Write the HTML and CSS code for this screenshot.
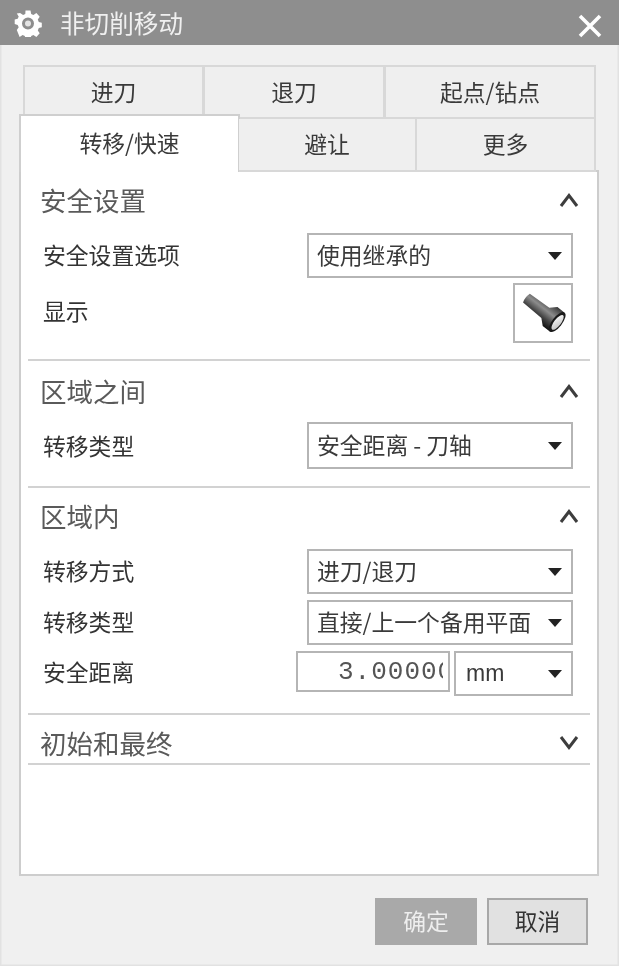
FILE: index.html
```html
<!DOCTYPE html>
<html lang="zh">
<head>
<meta charset="utf-8">
<title>非切削移动</title>
<link rel="stylesheet" href="styles.css">
</head>
<body>
<div class="window">
  <header class="titlebar">
    <svg class="gear" width="28" height="28" viewBox="0 0 28 28"><path fill="#fff" fill-rule="evenodd" d="M11.500 1.500h5l.7 3.500 2.200 1 3-1.900 3.300 3.600-1.900 2.900 1 2.300 3 .8v4.600l-3 .8-1 2.300 1.900 2.900-3.300 3.600-3-1.900-2.200 1-.7 3.500h-5l-.7-3.500-2.200-1-3 1.900L2.800 21.100l1.900-2.900-1-2.300-3-.8v-4.600l3-.8 1-2.300-1.900-2.900L6.100 4.100l3 1.900 2.200-1zM14 8.500a6 6 0 1 0 0 12 6 6 0 0 0 0-12z"/><circle cx="14" cy="14.500" r="3" fill="#e4e4e4"/></svg>
    <span class="title">非切削移动</span>
    <svg class="close" width="24" height="24" viewBox="0 0 24 24"><path d="M2 2l20 20M22 2L2 22" stroke="#fff" stroke-width="3.600" fill="none"/></svg>
  </header>

  <div class="tabs">
    <div class="tab-row tab-row-top">
      <div class="tab tab-a">进刀</div>
      <div class="tab tab-b">退刀</div>
      <div class="tab tab-c">起点/钻点</div>
    </div>
    <div class="tab-row tab-row-bottom">
      <div class="tab tab-active">转移/快速</div>
      <div class="tab tab-d">避让</div>
      <div class="tab tab-e">更多</div>
    </div>
  </div>

  <main class="panel">
    <section class="section section-safe">
      <div class="section-head"><span>安全设置</span><svg class="chev" width="22" height="16" viewBox="0 0 22 16"><path d="M3 14L11 3.500 19 14" stroke="#3d3d3d" stroke-width="3" fill="none"/></svg></div>
      <div class="row">
        <label>安全设置选项</label>
        <div class="select"><span>使用继承的</span><i class="caret"></i></div>
      </div>
      <div class="row row-show">
        <label>显示</label>
        <button class="icon-btn" type="button">
          <svg width="56" height="56" viewBox="-28 -28 56 56">
            <defs>
              <linearGradient id="body" x1="0" y1="0" x2="0" y2="1"><stop offset="0" stop-color="#3a3a3a"/><stop offset=".4" stop-color="#8c8c8c"/><stop offset=".7" stop-color="#444"/><stop offset="1" stop-color="#111"/></linearGradient>
              <linearGradient id="lens" x1="0" y1="0" x2="1" y2="1"><stop offset="0" stop-color="#fff"/><stop offset="1" stop-color="#bbb"/></linearGradient>
            </defs>
            <g transform="translate(0 -2) rotate(38)">
              <path d="M-21 -5.500 Q-23 0 -21 5.500 L3 6.500 L9 12 L18 12 L18 -12 L9 -12 L3 -6.500 Z" fill="url(#body)"/>
              <ellipse cx="18" cy="0" rx="5" ry="12" fill="#1a1a1a"/>
              <ellipse cx="18.500" cy="0" rx="3.400" ry="9" fill="url(#lens)"/>
            </g>
          </svg>
        </button>
      </div>
    </section>

    <section class="section section-between">
      <div class="section-head"><span>区域之间</span><svg class="chev" width="22" height="16" viewBox="0 0 22 16"><path d="M3 14L11 3.500 19 14" stroke="#3d3d3d" stroke-width="3" fill="none"/></svg></div>
      <div class="row">
        <label>转移类型</label>
        <div class="select select-tall"><span>安全距离 - 刀轴</span><i class="caret"></i></div>
      </div>
    </section>

    <section class="section section-within">
      <div class="section-head"><span>区域内</span><svg class="chev" width="22" height="16" viewBox="0 0 22 16"><path d="M3 14L11 3.500 19 14" stroke="#3d3d3d" stroke-width="3" fill="none"/></svg></div>
      <div class="row">
        <label>转移方式</label>
        <div class="select"><span>进刀/退刀</span><i class="caret"></i></div>
      </div>
      <div class="row row-next">
        <label>转移类型</label>
        <div class="select"><span>直接/上一个备用平面</span><i class="caret"></i></div>
      </div>
      <div class="row row-next row-distance">
        <label>安全距离</label>
        <div class="distance">
          <div class="number"><span class="number-value">3.00000</span></div>
          <div class="select select-unit"><span class="unit">mm</span><i class="caret"></i></div>
        </div>
      </div>
    </section>

    <section class="section section-final">
      <div class="section-head"><span>初始和最终</span><svg class="chev" width="22" height="16" viewBox="0 0 22 16"><path d="M3 2L11 12.500 19 2" stroke="#3d3d3d" stroke-width="3" fill="none"/></svg></div>
    </section>
  </main>

  <footer class="footer">
    <button class="btn btn-ok" type="button">确定</button>
    <button class="btn btn-cancel" type="button">取消</button>
  </footer>
</div>
</body>
</html>
```

FILE: styles.css
```css
* { box-sizing: border-box; }

html, body {
  margin: 0;
  height: 100%;
}

body {
  background: #f0f0f0;
  color: #3a3a3a;
  font-family: "Noto Sans CJK SC", "Liberation Sans", sans-serif;
  font-size: 22.800px;
  line-height: 1;
}

.window {
  width: 619px;
  height: 966px;
  overflow: hidden;
  filter: blur(0.6px);
  box-shadow: inset 0 0 0 1.500px #e2e2e2;
}

.titlebar {
  height: 45px;
  background: #8e8e8e;
  display: flex;
  align-items: center;
  padding: 0 17px 0 14px;
  color: #f0f0f0;
}

.gear { flex: none; }

.title {
  margin-left: 18px;
  font-size: 24.600px;
  flex: 1;
}

.close { margin-top: 6px; }

.tabs {
  padding-top: 20px;
  position: relative;
  z-index: 2;
}

.tab-row { display: flex; }

.tab-row-top { margin-left: 23px; width: 573px; }

.tab-row-bottom { margin-left: 19px; margin-top: -5px; }

.tab {
  display: flex;
  align-items: center;
  justify-content: center;
  background: #efefef;
  border: 2px solid #d8d8d8;
  height: 54px;
}

.tab-a { width: 181px; }
.tab-b { width: 182px; margin-left: -1px; }
.tab-c { width: 212px; margin-left: -1px; }

.tab-active {
  width: 221px;
  height: 58px;
  background: #fff;
  border-color: #cfcfcf;
  border-bottom: 0;
  padding-bottom: 2px;
}

.tab-d {
  width: 178px;
  margin: 5px 0 0 -1px;
  height: 53px;
  border-top: 0;
  border-left: 0;
}

.tab-e {
  width: 181px;
  margin: 5px 0 0 -2px;
  height: 53px;
  border-top: 0;
}

.panel {
  margin: -2px 0 0 19px;
  width: 580px;
  height: 706px;
  background: #fff;
  border: 2px solid #cdcdcd;
  padding: 0 7px;
}

.section {
  border-bottom: 2px solid #d2d2d2;
}

.section-safe { padding: 8px 0 16px; }
.section-between { padding: 10px 0 17px; }
.section-within { padding: 8px 0 17px; }
.section-final { padding-top: 8px; }

.section-head {
  height: 40px;
  display: flex;
  align-items: center;
  justify-content: space-between;
  font-size: 26.500px;
  color: #5a5a5a;
  padding-left: 12px;
  padding-right: 10px;
}

.section-safe .section-head,
.section-within .section-head { margin-bottom: 13px; }

.section-between .section-head { margin-bottom: 11px; }

.row {
  display: flex;
  align-items: flex-start;
  justify-content: space-between;
  padding: 0 17px 0 15px;
}

.row label {
  line-height: 44px;
  color: #333;
}

.row-show { margin-top: 5px; }
.row-show label { line-height: 56px; }
.row-next { margin-top: 6px; }
.section-between .row label { line-height: 47px; }
.row-distance label { line-height: 42px; }

.select {
  width: 266px;
  height: 45px;
  border: 2px solid #b5b5b5;
  background: #fff;
  display: flex;
  align-items: center;
  justify-content: space-between;
  padding: 0 9px 0 8px;
  white-space: nowrap;
}

.select-tall { height: 47px; }

.caret {
  flex: none;
  width: 0;
  height: 0;
  border-left: 7px solid transparent;
  border-right: 7px solid transparent;
  border-top: 8px solid #222;
}

.icon-btn {
  display: flex;
  align-items: center;
  justify-content: center;
  width: 60px;
  height: 60px;
  padding: 0;
  background: #fff;
  border: 2px solid #b5b5b5;
}

.distance {
  display: flex;
  align-items: flex-start;
  gap: 4px;
}

.number {
  width: 154px;
  height: 41px;
  border: 2px solid #b5b5b5;
  padding: 0 5px 0 40px;
  font-family: "Liberation Mono", monospace;
  font-size: 26px;
  line-height: 39px;
  letter-spacing: 1px;
  color: #555;
}

.number-value {
  display: block;
  overflow: hidden;
  white-space: nowrap;
}

.select-unit {
  width: 119px;
}

.unit {
  font-family: "Liberation Sans", sans-serif;
  font-size: 23px;
  padding-left: 2px;
}

.footer {
  display: flex;
  justify-content: flex-end;
  gap: 10px;
  padding: 22px 31px 0 0;
}

.btn {
  width: 102px;
  height: 47px;
  font: inherit;
  padding: 0;
}

.btn-ok {
  background: #a9a9a9;
  border: 0;
  color: #eeeeee;
}

.btn-cancel {
  width: 101px;
  background: #e1e1e1;
  border: 2px solid #a8a8a8;
  color: #333;
}
```
